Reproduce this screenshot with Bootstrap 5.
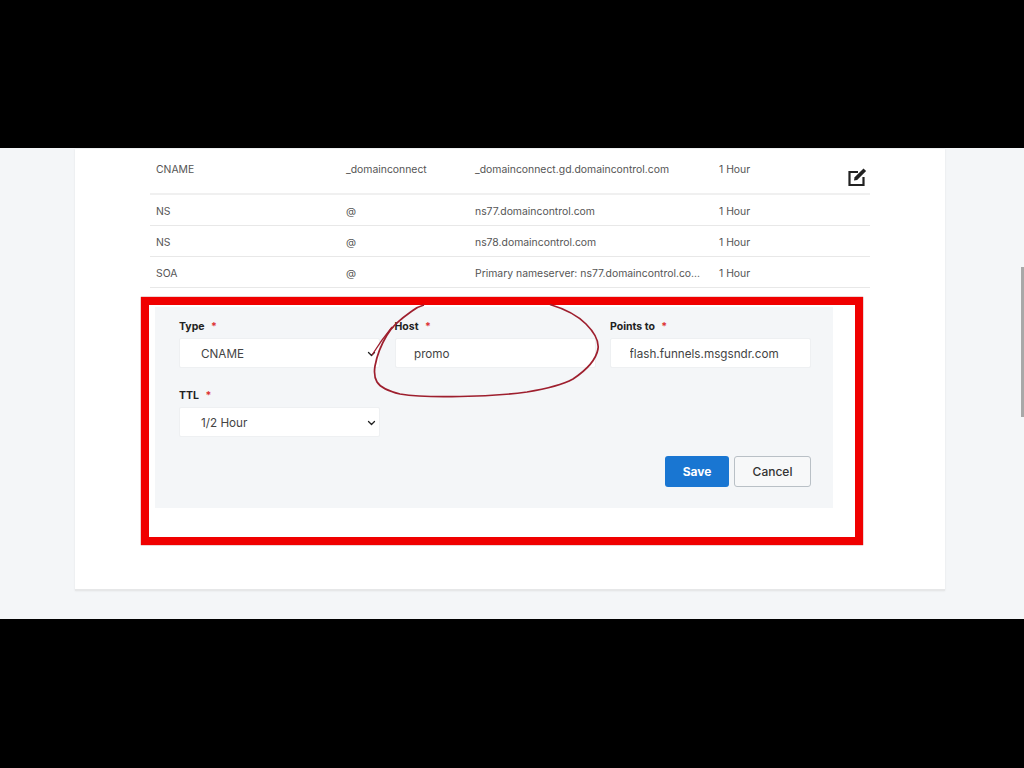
<!doctype html>
<html lang="en">
<head>
<meta charset="utf-8">
<link href="https://cdn.jsdelivr.net/npm/bootstrap@5.3.0/dist/css/bootstrap.min.css" rel="stylesheet">
<style>
html,body{height:768px;overflow:hidden;background:#000}
body{font-family:Inter,"Liberation Sans",sans-serif;color:#444}
.letterbox-top{height:148px;background:#000}
.letterbox-bottom{height:149px;background:#000}
.screen{height:471px;background:#f4f6f8;padding:1px 79px 0 75px;position:relative;overflow:hidden}
.sheet{width:870px;height:442px;background:#fff;border-bottom:2px solid #e6e7e8;box-shadow:0 0 2px rgba(0,0,0,.08);padding:1px 75px 0;position:relative}
.dns-row{display:grid;grid-template-columns:190px 129px 244px 1fr;font-size:10.4px;height:31px;align-items:center;padding:4px 0 0 6px;border-bottom:1px solid #e8e8e8;color:#555}
.dns-row.tall{height:45px;align-items:start;padding-top:12px;border-bottom-width:2px;position:relative;border-bottom-color:#f0f0f0}
.edit-ico{position:absolute;right:3px;top:17px;width:20px;height:20px}
.red-box{width:722px;height:248px;margin:9px 0 0 -9px;border:8px solid #f00000;padding:2px 22px 0 6px;box-shadow:0 0 1px #900}
.panel{background:#f4f6f8;height:201px;padding:13px 22px 0 24px}
.fields{display:grid;grid-template-columns:201px 201px 201px;column-gap:14.5px;row-gap:21px}
.fld-label{font-size:10.5px;font-weight:700;color:#222;line-height:13px;height:18px;margin:0}
.req{color:#d33;margin-left:4px}
.fld-control,.fld-control:focus{height:30px;border:1px solid #eef0f2;border-radius:2px;background-color:#fff;font-size:11.7px;color:#444;padding:1px 19px 0 18.500px;box-shadow:none}
.form-select.fld-control{padding:4px 19px 0 21px;background-image:url("data:image/svg+xml,%3csvg xmlns='http://www.w3.org/2000/svg' viewBox='0 0 16 16'%3e%3cpath fill='none' stroke='%23222' stroke-linecap='round' stroke-linejoin='round' stroke-width='2.600' d='M2 5l6 6 6-6'/%3e%3c/svg%3e");background-position:right 3px top 11px;background-size:9px 8px}
.btn-save{width:64px;height:31px;background:#1976d2;color:#fff;font-size:12px;font-weight:700;border:0;border-radius:3px;padding:0}
.btn-cancel{width:77px;height:31px;background:#f7f8f9;color:#333;font-size:12px;font-weight:500;border:1px solid #b9c0c6;border-radius:3px;padding:0}
.actions{margin-top:19px;gap:5px}
.scribble{position:absolute;left:0;top:0;pointer-events:none}
.page-scroll{position:absolute;right:0;top:119px;width:3px;height:150px;background:#a8a8a8}
</style>
</head>
<body>
<div class="letterbox-top"></div>
<div class="screen">
  <div class="sheet">
    <div class="dns-row tall"><span>CNAME</span><span>_domainconnect</span><span>_domainconnect.gd.domaincontrol.com</span><span>1 Hour</span>
      <svg class="edit-ico" viewBox="0 0 20 20" fill="none" stroke="#222" aria-hidden="true"><path d="M11 5H2.500v13h14V10" stroke-width="2.200"/><path d="M7 13.500l.6-3.200L16.500 1.500l2.600 2.600-9 8.800z" fill="#222" stroke="none"/></svg>
    </div>
    <div class="dns-row"><span>NS</span><span>@</span><span>ns77.domaincontrol.com</span><span>1 Hour</span></div>
    <div class="dns-row"><span>NS</span><span>@</span><span>ns78.domaincontrol.com</span><span>1 Hour</span></div>
    <div class="dns-row"><span>SOA</span><span>@</span><span>Primary nameserver: ns77.domaincontrol.co...</span><span>1 Hour</span></div>
    <div class="red-box">
      <div class="panel">
        <div class="fields">
          <div><p class="fld-label">Type <span class="req">*</span></p><select class="form-select fld-control"><option>CNAME</option></select></div>
          <div><p class="fld-label">Host <span class="req">*</span></p><input class="form-control fld-control" value="promo"></div>
          <div><p class="fld-label">Points to <span class="req">*</span></p><input class="form-control fld-control" value="flash.funnels.msgsndr.com"></div>
          <div><p class="fld-label">TTL <span class="req">*</span></p><select class="form-select fld-control"><option>1/2 Hour</option></select></div>
        </div>
        <div class="actions d-flex justify-content-end">
          <button class="btn btn-save" type="button">Save</button>
          <button class="btn btn-cancel" type="button">Cancel</button>
        </div>
      </div>
    </div>
  </div>
  <svg class="scribble" width="1024" height="471" viewBox="0 148 1024 471" fill="none" aria-hidden="true">
    <path d="M550 304.500C565 309 577 315 586 324C595 333 599 342 598 349C596 360 585 371 573 379C560 386 545 389 527 392C505 395 482 396.500 460 396.500C440 397 418 397 400 394C388 391 380 387 377 382C374 377 374 372 375 366C377 355 381 345 387 335C392 326 402 318 412 311C416 308 420 306 424 305" stroke="#9e1f2e" stroke-width="1.700"/>
    <path d="M372 355C377 347 383 338 392 327" stroke="#9e1f2e" stroke-width="1.200"/>
  </svg>
  <div class="page-scroll"></div>
</div>
<div class="letterbox-bottom"></div>
<script src="https://cdn.jsdelivr.net/npm/bootstrap@5.3.0/dist/js/bootstrap.bundle.min.js"></script>
</body>
</html>
